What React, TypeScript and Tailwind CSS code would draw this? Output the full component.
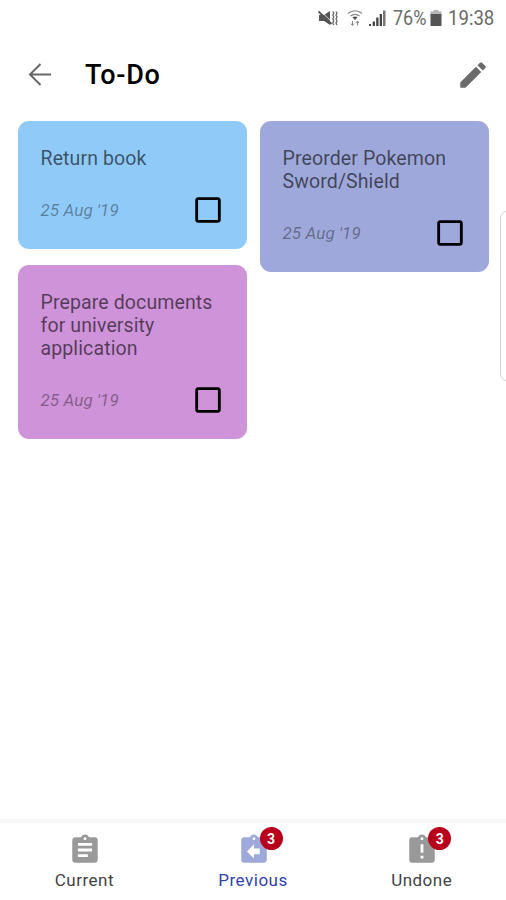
import React from 'react';
import { MdAssignment, MdAssignmentLate, MdAssignmentReturn, MdCheckBoxOutlineBlank, MdEdit } from 'react-icons/md';
import clsx from 'clsx';

interface Todo {
  title: string;
  date: string;
  color: string;
}

const leftColumn: Todo[] = [
  { title: 'Return book', date: "25 Aug '19", color: 'bg-[#90caf9]' },
  { title: 'Prepare documents for university application', date: "25 Aug '19", color: 'bg-[#ce93d8]' },
];

const rightColumn: Todo[] = [
  { title: 'Preorder Pokemon Sword/Shield', date: "25 Aug '19", color: 'bg-[#9fa8da]' },
];

const StatusBar: React.FC = () => (
  <div className="flex h-[35px] items-center justify-end pr-[10px] text-[#5c5c5c]">
    {/* muted, vibrate */}
    <svg className="mr-[9px] h-[18px] w-5 shrink-0" viewBox="0 0 20 18" fill="none">
      <path d="M1 6h5l6-4v14l-6-4H1z" fill="#555" />
      <path d="M2 1.500 14 13" stroke="#fff" strokeWidth="0.800" />
      <path d="M0.500 2.500 13.500 15" stroke="#555" strokeWidth="1.800" />
      <path d="M14.800 2.500l1 1.500-1 2 1 2-1 2 1 2-1 2 1 2M18 2.500l1 1.500-1 2 1 2-1 2 1 2-1 2 1 2" stroke="#666" strokeWidth="1.300" />
    </svg>
    {/* wifi */}
    <svg className="mr-[5px] h-[18px] w-4 shrink-0" viewBox="0 0 16 18" fill="none" stroke="#888" strokeWidth="1.200">
      <path d="M1 4.500C5 .8 11 .8 15 4.500M3.500 7c3-2.300 6-2.300 9 0" />
      <path d="M5.500 8.500c1.500-1.500 3.500-1.500 5 0L8 11z" fill="#555" stroke="none" />
      <path d="M5.500 12v4M3.800 14.500l1.700 2 1.500-2M10.500 16.500v-4M9 14l1.500-2 1.500 2" strokeWidth="1" />
    </svg>
    {/* signal */}
    <svg className="mr-[7px] h-[18px] w-[18px] shrink-0" viewBox="0 0 18 18" fill="#444">
      <path d="M1 15h2v2H1zM4.700 12.500H7V17H4.700zM8.200 8.500h2.300V17H8.200zM11.700 5h2.300v12h-2.300z" />
      <path d="M15 1.500h2.500V17H15z" fill="#777" />
    </svg>
    <span className="w-[37px] origin-left scale-x-90 text-[20px] leading-none whitespace-nowrap text-[#6a6a6a]">76%</span>
    {/* battery */}
    <svg className="mr-[6px] h-[18px] w-3 shrink-0" viewBox="0 0 12 18">
      <path d="M3.500 1h5v1.500h3V6H.5V2.500h3z" fill="#b5b5b5" />
      <path d="M.5 5h11v12H.5z" fill="#555" />
    </svg>
    <span className="w-[48px] origin-left scale-x-93 text-[20px] leading-none whitespace-nowrap text-[#6a6a6a]">19:38</span>
  </div>
);

const Header: React.FC = () => (
  <header className="flex h-[79px] items-center pl-[28px] pr-[16px]">
    <svg className="h-6 w-6" viewBox="0 0 24 24" fill="none" stroke="#666" strokeWidth="2">
      <path d="M23 11.500H2.500M12.500 1 2 11.500 12.500 22" />
    </svg>
    <h1 className="ml-[33px] flex-1 text-[27px] leading-8 font-medium tracking-[0.700px] text-black">To-Do</h1>
    <MdEdit className="h-[34px] w-[34px] text-[#6b6b6b]" />
  </header>
);

const TodoCard: React.FC<{ todo: Todo }> = ({ todo }) => (
  <div className={clsx('rounded-[11px] pt-[26px] pr-[22px] pb-[22.500px] pl-[22.500px]', todo.color)}>
    <p className="text-[19.500px] leading-[23px] tracking-[0.120px] text-black/60">{todo.title}</p>
    <div className="mt-[22.500px] flex h-[34px] items-center justify-between">
      <span className="text-[17px] leading-5 tracking-[0.100px] text-black/38 italic">{todo.date}</span>
      <MdCheckBoxOutlineBlank className="h-[34px] w-[34px] text-black" />
    </div>
  </div>
);

interface TabProps {
  label: string;
  icon: React.ReactNode;
  badge?: number;
  active?: boolean;
}

const Tab: React.FC<TabProps> = ({ label, icon, badge, active }) => (
  <div className="flex flex-1 flex-col items-center pt-[10px]">
    <div className={clsx('relative ml-px', active ? 'text-[#9fa8da]' : 'text-[#999]')}>
      {icon}
      {badge && (
        <span className="absolute -top-[6px] left-[23px] flex h-[23px] w-[23px] items-center justify-center rounded-full bg-[#b8001c] text-[14px] leading-none font-bold text-white">
          {badge}
        </span>
      )}
    </div>
    <span className={clsx('mt-[3px] text-[17px] leading-5 tracking-[0.500px]', active ? 'text-[#3242b0]' : 'text-[#424242]')}>
      {label}
    </span>
  </div>
);

const App: React.FC = () => {
  return (
    <div className="relative flex h-[900px] w-[506px] flex-col overflow-hidden bg-white font-['Roboto',sans-serif]">
      <StatusBar />
      <Header />

      <main className="flex flex-1 items-start gap-[13px] pt-[7px] pr-[17px] pl-[18px]">
        <div className="flex flex-1 flex-col gap-4">
          {leftColumn.map((todo) => (
            <TodoCard key={todo.title} todo={todo} />
          ))}
        </div>
        <div className="flex flex-1 flex-col gap-4">
          {rightColumn.map((todo) => (
            <TodoCard key={todo.title} todo={todo} />
          ))}
        </div>
      </main>

      {/* edge panel handle */}
      <div className="absolute top-[211px] -right-3 h-[170px] w-[18px] rounded-[7px] border border-[#d2d2d2] bg-white" />

      <nav className="flex h-[81px] border-t-4 border-[#f7f7f7]">
        <Tab label="Current" icon={<MdAssignment className="h-[34px] w-[34px]" />} />
        <Tab label="Previous" icon={<MdAssignmentReturn className="h-[34px] w-[34px]" />} badge={3} active />
        <Tab label="Undone" icon={<MdAssignmentLate className="h-[34px] w-[34px]" />} badge={3} />
      </nav>
    </div>
  );
};

export default App;
